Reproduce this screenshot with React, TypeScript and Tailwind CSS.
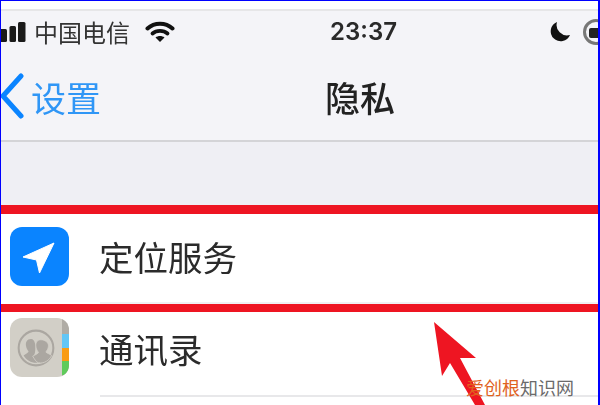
const cjk = { fontFamily: '"Noto Sans CJK SC", "Noto Sans", sans-serif' };

function SignalBars() {
  return (
    <svg width="25" height="20" viewBox="0 0 25 20" className="shrink-0">
      <rect x="-2" y="7" width="8" height="13" rx="1.500" fill="#1a1a1a" />
      <rect x="8.500" y="4" width="6.500" height="16" rx="1.500" fill="#1a1a1a" />
      <rect x="17" y="0" width="7.500" height="20" rx="1.500" fill="#1a1a1a" />
    </svg>
  );
}

function WifiIcon() {
  return (
    <svg width="30" height="22" viewBox="0 0 30 22" fill="none" stroke="#111" strokeLinecap="round" className="shrink-0">
      <path d="M2.500 7.500C9.500 1 20.500 1 27.500 7.500" strokeWidth="4" />
      <path d="M7.500 12.500C11.500 9 18.500 9 22.500 12.500" strokeWidth="3.800" />
      <path d="M15 21l-4.500-4.500c2.500-2 6.500-2 9 0z" fill="#111" stroke="none" />
    </svg>
  );
}

function LocationIcon() {
  return (
    <div className="w-[59px] h-[59px] rounded-[12px] bg-[#0a84ff] shrink-0">
      <svg width="59" height="59" viewBox="0 0 59 59">
        <path d="M13 30L44 16 29.500 46 26.500 33z" fill="#fff" stroke="#fff" strokeWidth="1" strokeLinejoin="round" />
      </svg>
    </div>
  );
}

function ContactsIcon() {
  return (
    <div className="w-[59px] h-[59px] rounded-[12px] bg-[#d2cfc7] flex overflow-hidden shrink-0">
      <div className="flex-1 flex items-center justify-center pr-[1px]">
        <svg width="38" height="38" viewBox="0 0 46 46">
          <circle cx="23" cy="23" r="21" fill="none" stroke="#aba7a1" strokeWidth="2.500" />
          <path d="M17 12c-5 0-7 4-6 9 .5 3 2 5 3 6 0 2-3 3-6 5 3 5 9 9 15 9 2 0 3-.5 4-1-1-4-5-6-7-7 1-2 2-4 2-7 1-5 0-14-5-14z" fill="#aba7a1" />
          <path d="M29 13c-5 0-7 4-6 9 .5 3 2 5 3 6 0 2-4 3-7 5 2 3 4 7 7 8 7 1 13-3 16-9-3-2-6-3-7-4 1-2 3-4 3-7 1-4-4-8-9-8z" fill="#aba7a1" stroke="#d2cfc7" strokeWidth="1" />
        </svg>
      </div>
      <div className="w-[7px] flex flex-col bg-[#b0aca5]">
        <div className="h-[16px]" />
        <div className="h-[14px] bg-[#62c6f6]" />
        <div className="h-[13px] bg-[#f99c14]" />
        <div className="h-[14px] bg-[#5fcb5b]" />
      </div>
    </div>
  );
}

export default function App() {
  return (
    <div
      className="relative w-[600px] h-[405px] overflow-hidden bg-white border-t border-l border-r-2 border-[#0000ff]"
      style={cjk}
    >
      {/* top white strip */}
      <div className="h-[8px] bg-white" />

      {/* status + nav */}
      <div className="h-[133px] bg-[#f4f4f8] border-t-2 border-b-2 border-t-[#e6e6e8] border-b-[#d4d4d7] flex flex-col blur-[0.6px]">
        <div className="h-[41px] flex items-center whitespace-nowrap">
          <SignalBars />
          <span className="ml-[8px] text-[24px] leading-none text-[#333] shrink-0">中国电信</span>
          <div className="ml-[15px] shrink-0">
            <WifiIcon />
          </div>
          <span className="ml-[155px] text-[24px] leading-none font-semibold text-[#2a2a2a] shrink-0" style={{ fontFamily: 'Inter, sans-serif' }}>
            23:37
          </span>
          <svg width="22" height="22" viewBox="0 0 22 22" className="ml-[152px] shrink-0">
            <path d="M8 1a10 10 0 1 0 13 13A10.500 10.500 0 0 1 8 1z" fill="#111" />
          </svg>
          <div className="ml-[12px] w-[26px] h-[26px] shrink-0 rounded-full border-[3px] border-[#777] flex items-center justify-center">
            <div className="w-[13px] h-[10px] bg-[#222] rounded-[2px] mt-[3px]" />
          </div>
        </div>
        <div className="flex-1 flex items-center">
          <svg width="24" height="46" viewBox="0 0 24 46" fill="none" className="shrink-0">
            <path d="M20 3L2 23l18 20" stroke="#0a84ff" strokeWidth="5" strokeLinecap="round" strokeLinejoin="round" />
          </svg>
          <span className="ml-[6px] text-[35px] leading-none text-[#2f96f6]">设置</span>
          <span className="ml-[224px] text-[35px] leading-none font-medium text-[#222]">隐私</span>
        </div>
      </div>

      {/* grouped section gap */}
      <div className="h-[63px] bg-[#efeff4]" />

      <div className="h-[9px] bg-[#ee1522] blur-[0.5px]" />

      <div className="h-[88px] bg-white flex items-center pl-[9px] pb-[4px] blur-[0.5px]">
        <LocationIcon />
        <span className="ml-[30px] text-[34.500px] leading-none text-[#2b2b2b]">定位服务</span>
      </div>
      <div className="ml-[99px] h-[2px] bg-[#f0f0f2]" />

      <div className="h-[8px] bg-[#ee1522] blur-[0.5px]" />

      <div className="h-[83px] bg-white flex items-start pl-[9px] pt-[6px] blur-[0.5px]">
        <ContactsIcon />
        <span className="ml-[30px] mt-[13px] text-[34.500px] leading-none text-[#2b2b2b]">通讯录</span>
      </div>

      <div className="ml-[99px] h-[2px] bg-[#e8e8ea]" />

      {/* annotation arrow */}
      <svg width="80" height="90" viewBox="0 0 80 90" className="absolute left-[419px] top-[315px]">
        <path d="M14 6L56 42 40 42 65 89 55 89 30 47 22 60z" fill="#ee1522" />
      </svg>

      {/* watermark */}
      <div className="absolute left-[465px] top-[376px] text-[18px] leading-[20px] whitespace-nowrap">
        <span className="text-[#e0621e]">爱创根</span>
        <span className="text-[#6b6b6b]">知识网</span>
      </div>
    </div>
  );
}
